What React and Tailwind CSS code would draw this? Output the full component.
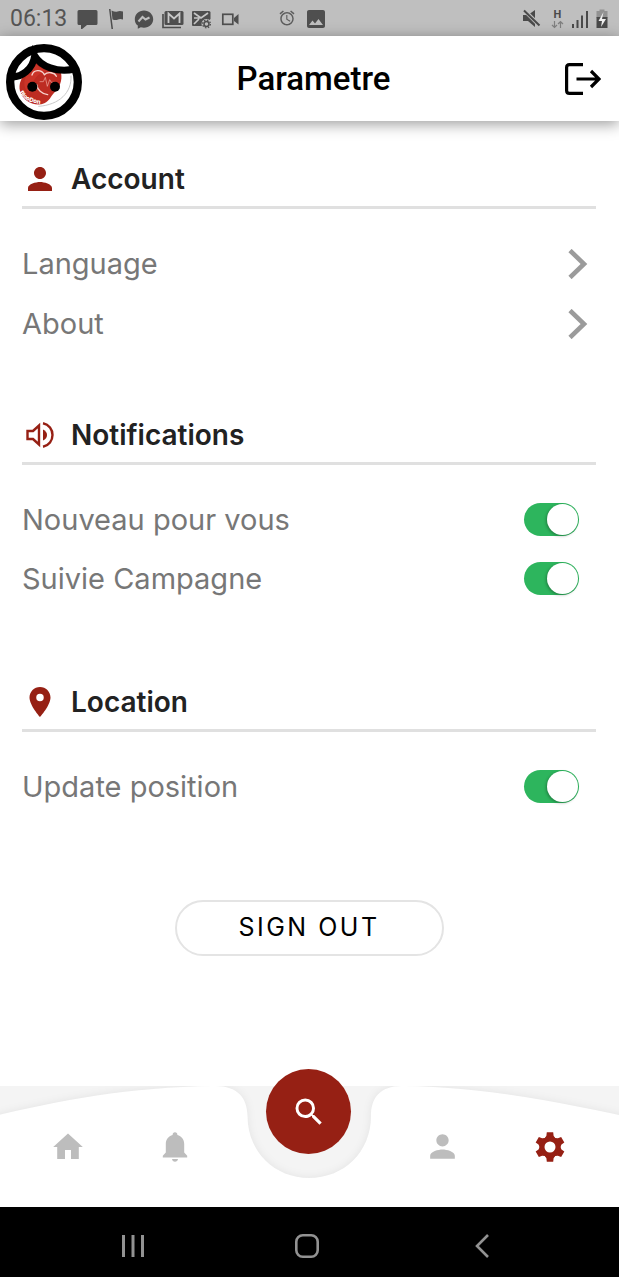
import { useState } from "react";
import { MdPerson, MdLocationOn, MdSearch, MdImage, MdAlarm } from "react-icons/md";

function StatusBar() {
  return (
    <div className="flex h-9 items-center justify-between bg-[#bfbfbf] px-2.5 pt-0.5 font-['Roboto',sans-serif] text-[#555]">
      <div className="flex items-center">
        <span className="w-[67px] text-[23px] leading-8">06:13</span>
        <svg className="h-5 w-[248px]" viewBox="77 8 248 20" fill="#4f4f4f" aria-hidden="true">
          <path d="M79 9h17q1.500 0 1.500 1.500v12q0 1.500-1.500 1.500h-9l-6 5v-5h-2q-1.500 0-1.500-1.500v-12q0-1.500 1.500-1.500Z" />
          <path d="M109 8h1.500l2.500 20h-1.500ZM111.500 9.500q4 2 6 1t5.500 0v8q-3-1-5 0t-5.500 0Z" />
          <path d="M144 9.500c-5.200 0-9.200 3.800-9.200 8.700 0 2.700 1 4.900 3 6.400v3.200l3-1.600c1 .3 2 .5 3.200.5 5.200 0 9.200-3.800 9.200-8.500s-4-8.700-9.200-8.700Z" />
          <path d="m138.500 20.500 4-4.500 3 2.500 4-2" fill="none" stroke="#bfbfbf" strokeWidth="2" />
          <path d="M163 13v13.500h18" fill="none" stroke="#4f4f4f" strokeWidth="1.700" />
          <path d="M166 10h16q1.500 0 1.500 1.500v11q0 1.500-1.500 1.500h-16q-1.500 0-1.500-1.500v-11q0-1.500 1.500-1.500Z" />
          <path d="M168.500 22v-9.500l5.500 5 5.500-5V22" fill="none" stroke="#c9c9c9" strokeWidth="1.800" />
          <path d="M193 10h16q1.500 0 1.500 1.500V18l-8 7H193q-1 0-1-1V11q0-1 1-1Z" />
          <path d="m194 12 7 5 7-5M194 23l5-5M194 17h6" fill="none" stroke="#c6c6c6" strokeWidth="1.700" />
          <circle cx="206.500" cy="23" r="5" fill="#bfbfbf" />
          <circle cx="206.500" cy="23" r="2.500" fill="none" stroke="#4f4f4f" strokeWidth="1.500" />
          <circle cx="206.500" cy="23" r="3.900" fill="none" stroke="#4f4f4f" strokeWidth="1.200" strokeDasharray="1.500 1.560" />
          <rect x="222.800" y="13.300" width="10" height="10" fill="none" stroke="#4f4f4f" strokeWidth="1.700" />
          <path d="m234 17 4.500-4v10.500L234 20Z" />
          <MdAlarm x="278" y="8" size="18" color="#5d5d5d" />
          <MdImage x="304" y="6" size="24" color="#4f4f4f" />
        </svg>
      </div>
      <svg className="h-5 w-[86px]" viewBox="523 8 86 20" fill="#4a4a4a" aria-hidden="true">
        <path d="M523 14h5l7-5v17l-7-6h-5Z" />
        <path d="m524 9 16 16" stroke="#bfbfbf" strokeWidth="4" />
        <path d="m524 9.500 15.500 15" stroke="#4a4a4a" strokeWidth="2" />
        <text x="553.500" y="17" fontSize="11" fontWeight="700" fontFamily="Roboto">H</text>
        <path d="M554.500 20v6m-2.500-2 2.500 2.500L557 24M560.500 27v-6m-2.500 2 2.500-2.500L563 23" fill="none" stroke="#808080" strokeWidth="1.200" />
        <path d="M572 23h2v4h-2ZM576.500 19h2v8h-2ZM581 14.500h2V27h-2ZM586 10h2v17h-2Z" />
        <path d="M599.500 10v-1.500h5V10h3v7h-11v-7Z" fill="#929292" />
        <path d="M596.500 16h11v11h-11Z" />
        <path d="m603.500 11-5 9h3.500l-1 6 5-8H602Z" fill="#eee" />
      </svg>
    </div>
  );
}

function Avatar() {
  return (
    <svg className="size-[76px]" viewBox="18 23 228 228" role="img" aria-label="BlooDon">
      <defs>
        <path id="badge-arc" d="M58 168Q76 201 128 203" />
      </defs>
      <circle cx="132" cy="137" r="104" fill="#fff" />
      <path d="M213 118c3 50-35 88-98 92" fill="none" stroke="#c9c9c9" strokeWidth="3" />
      <path d="M103 72c17 20 45 33 80 37 5 24-5 44-19 59-12 12-15 26-31 33-28 12-66-7-73-37-5-21 4-39 15-51 15-16 25-22 28-41Z" fill="#bd2c22" />
      <path d="M103 78c10 12 23 19 34 26-20 5-42 25-49 65-16-8-20-33-8-52 10-13 21-18 23-39Z" fill="#d33b2d" opacity=".6" />
      <path d="M96 116c5-16 28-18 37-1 10-10 31-7 36 5M110 145c2 15 15 28 33 30" fill="none" stroke="#f7d4ce" strokeWidth="4" strokeLinecap="round" />
      <path d="M119 136h11l6-13 6 27 7-20 5 8h11" fill="none" stroke="#f0b0a8" strokeWidth="2" />
      <text fontSize="18" fontWeight="800" fontFamily="Inter, sans-serif" fill="#fff">
        <textPath href="#badge-arc">BlooDon</textPath>
      </text>
      <path d="M28 121C65 126 99 98 104 58c18 32 67 52 120 40" fill="none" stroke="#000" strokeWidth="21" />
      <circle cx="132" cy="137" r="101.500" fill="none" stroke="#000" strokeWidth="25" />
      <circle cx="97" cy="151" r="15" />
      <circle cx="165" cy="151" r="15" />
    </svg>
  );
}

function Header() {
  return (
    <header className="relative grid h-[85px] grid-cols-[1fr_auto_1fr] items-center bg-white pr-[18px] pl-1.5 shadow-[0_3px_14px_rgba(0,0,0,0.4)]">
      <div className="pt-1.5">
        <Avatar />
      </div>
      <h1 className="pl-5 font-['Roboto',sans-serif] text-[33px] leading-10 font-medium text-black">Parametre</h1>
      <button type="button" aria-label="Log out" className="justify-self-end">
        <svg className="h-8 w-[36px]" viewBox="0 0 36 32" fill="none" stroke="#000" strokeWidth="3.200">
          <path d="M18 1.600H4.500q-2.900 0-2.900 2.900v23q0 2.900 2.900 2.900H18M11.500 16H34M26 8l8 8-8 8" />
        </svg>
      </button>
    </header>
  );
}

function SpeakerIcon() {
  return (
    <svg className="size-7" viewBox="0 0 28 28" fill="none" stroke="#962014" strokeWidth="2.400" aria-hidden="true">
      <path d="M1.500 10v8H7l6 5.500v-19L7 10Z" />
      <path d="M17 8.500q4 2 4 5.500t-4 5.500Z" fill="#962014" stroke="none" />
      <path d="M17 2.300C23 3.500 26.500 8.500 26.500 14S23 24.500 17 25.700" />
    </svg>
  );
}

function HomeIcon() {
  return (
    <svg className="size-[30px]" viewBox="0 0 30 30" fill="currentColor" aria-hidden="true">
      <path d="M15 1.500 29.800 15H25.800v12H18v-9h-6v9H4.200V15H.2Z" />
    </svg>
  );
}

function BellIcon() {
  return (
    <svg className="size-[30px]" viewBox="0 0 30 30" fill="currentColor" aria-hidden="true">
      <path d="M15 .3c1.500 0 2.400 1 2.400 2.600 4.200 1.100 6.800 4.500 6.800 9v8.600l3 3.300v1.700H2.800v-1.700l3-3.300v-8.600c0-4.500 2.600-7.900 6.800-9C12.600 1.300 13.500.3 15 .3ZM12 27h6c-.3 1.700-1.400 2.800-3 2.800S12.300 28.700 12 27Z" />
    </svg>
  );
}

function GearIcon() {
  return (
    <svg className="size-[30px]" viewBox="-15 -15 30 30" aria-hidden="true">
      <circle r="8" fill="none" stroke="currentColor" strokeWidth="5" />
      {[0, 60, 120, 180, 240, 300].map((angle) => (
        <path key={angle} d="M-5.500-8.500-3.600-11.200-3.200-14.700H3.200L3.600-11.200 5.500-8.500Z" fill="currentColor" transform={`rotate(${angle})`} />
      ))}
    </svg>
  );
}

function Section({ icon, title, children }) {
  return (
    <section>
      <h2 className="flex h-[59px] items-center gap-[13px] border-b-[3px] border-[#e0e0e0] pt-px text-[28px] font-semibold text-[#222]">
        <span className="flex w-9 justify-center text-[#962014]">{icon}</span>
        {title}
      </h2>
      <div className="pt-[25px]">{children}</div>
    </section>
  );
}

function LinkRow({ label }) {
  return (
    <a href="#" className="flex h-[60px] items-center justify-between pr-2">
      {label}
      <svg className="h-[30px] w-5" viewBox="0 0 20 30" fill="none" stroke="#9b9b9b" strokeWidth="4.600" aria-hidden="true">
        <path d="m2 1.500 14 13.500L2 28.500" />
      </svg>
    </a>
  );
}

function ToggleRow({ label }) {
  const [on, setOn] = useState(true);
  return (
    <label className="flex h-[59px] items-center justify-between pr-[17px]">
      {label}
      <input
        type="checkbox"
        role="switch"
        checked={on}
        onChange={() => setOn(!on)}
        className="flex h-[33px] w-[55px] appearance-none items-center rounded-full bg-[#c4c4c4] px-px before:size-[31px] before:rounded-full before:bg-white before:shadow-[-1px_1px_3px_rgba(0,0,0,0.3)] checked:justify-end checked:bg-[#2db55d]"
      />
    </label>
  );
}

function TabBar() {
  return (
    <nav className="relative h-[121px] bg-[#f4f4f4]">
      <svg className="absolute inset-0 size-full" viewBox="0 0 619 121" preserveAspectRatio="none" aria-hidden="true">
        <path
          className="drop-shadow-[0_0_4px_rgba(0,0,0,0.07)]"
          fill="#fff"
          d="M-9 31C60 14 130 1 215 0C238 0 247 12 247.500 30C247.500 66 275 92 309 92C344 92 371 66 371 30C371 12 380 0 402 0C480 1 550 14 628 31V130H-9Z"
        />
      </svg>
      <div className="relative grid h-full grid-cols-[2fr_2fr_3fr_2fr_2fr] items-center justify-items-center pr-4 pl-[15px] text-[#bdbdbd]">
        <button type="button" aria-label="Home"><HomeIcon /></button>
        <button type="button" aria-label="Notifications"><BellIcon /></button>
        <button type="button" aria-label="Search" className="-mt-[70px] flex size-[85px] items-center justify-center rounded-full bg-[#962014] text-white">
          <MdSearch size={36} />
        </button>
        <button type="button" aria-label="Profile"><MdPerson size={37} /></button>
        <button type="button" aria-label="Settings" className="text-[#962014]"><GearIcon /></button>
      </div>
    </nav>
  );
}

function SystemBar() {
  return (
    <div className="grid h-[70px] grid-cols-3 items-center justify-items-center bg-black pt-2 pr-[50px] pl-[46px]">
      <button type="button" aria-label="Recent apps">
        <svg className="h-6 w-6" viewBox="0 0 24 24" stroke="#929292" strokeWidth="3">
          <path d="M2.500 1v22M12 1v22M21.500 1v22" />
        </svg>
      </button>
      <button type="button" aria-label="Home screen">
        <svg className="h-6 w-6" viewBox="0 0 24 24" fill="none" stroke="#929292" strokeWidth="2.600">
          <rect x="1.300" y="1.300" width="21.400" height="21.400" rx="6.500" />
        </svg>
      </button>
      <button type="button" aria-label="Back">
        <svg className="h-6 w-4" viewBox="0 0 16 24" fill="none" stroke="#929292" strokeWidth="2.600">
          <path d="M14 1 3 12l11 11" />
        </svg>
      </button>
    </div>
  );
}

export default function App() {
  return (
    <div className="flex min-h-screen flex-col bg-white font-['Inter','Roboto',sans-serif]">
      <StatusBar />
      <Header />
      <main className="flex flex-1 flex-col pt-[29px] pr-[23px] pl-[22px] text-[29px] text-[#777]">
        <Section icon={<MdPerson size={38} />} title="Account">
          <LinkRow label="Language" />
          <LinkRow label="About" />
        </Section>
        <div className="pt-[52px]">
          <Section icon={<SpeakerIcon />} title="Notifications">
            <ToggleRow label="Nouveau pour vous" />
            <ToggleRow label="Suivie Campagne" />
          </Section>
        </div>
        <div className="pt-[65px]">
          <Section icon={<MdLocationOn size={36} />} title="Location">
            <ToggleRow label="Update position" />
          </Section>
        </div>
        <button type="button" className="mt-[84px] h-14 w-[269px] self-center rounded-full border-2 border-[#e4e4e4] text-[25px] tracking-widest text-black">
          SIGN OUT
        </button>
      </main>
      <TabBar />
      <SystemBar />
    </div>
  );
}
